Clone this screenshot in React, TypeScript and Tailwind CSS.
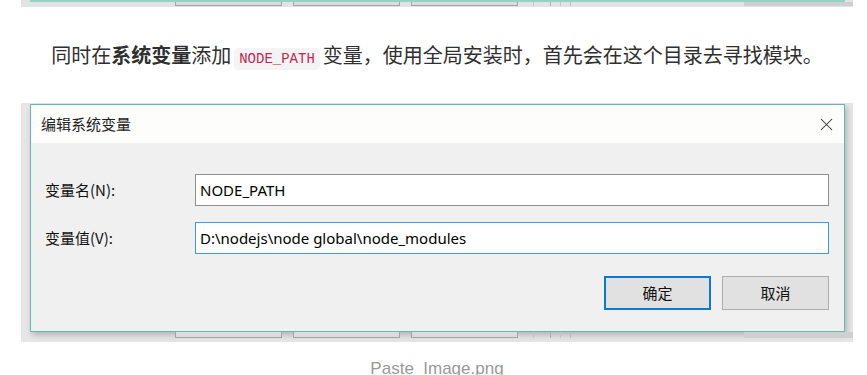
import { X } from "lucide-react";

// underlying window's button outlines peeking out under a dialog
const Outlines = ({ h }: { h: string }) => {
  return (
    <div className={`flex ${h}`}>
      <div className="ml-[154px] w-[107px] border-x border-b border-[#a3a3a3] bg-[#dcdcdc]" />
      <div className="ml-[11px] w-[107px] border-x border-b border-[#a3a3a3] bg-[#dcdcdc]" />
      <div className="ml-[11px] w-[107px] border-x border-b border-[#a3a3a3] bg-[#dcdcdc]" />
      <div className="ml-[15px] w-px bg-[#c4c4c4]" />
      <div className="ml-[16px] w-px bg-[#b0b0b0]" />
      <div className="ml-[9px] w-px bg-[#c4c4c4]" />
      <div className="ml-[9px] w-px bg-[#bdbdbd]" />
      <div className="ml-[173px] flex-1 bg-[#cfcfcf]" />
    </div>
  );
};

const Field = ({ label, value, active }: { label: string; value: string; active?: boolean }) => {
  return (
    <div className="flex items-center">
      <div className="w-[164px] pl-[14px] text-[15px] text-[#111]">{label}</div>
      <div
        className={`w-[634px] h-[32px] flex items-center px-[4px] bg-white border font-['Noto_Sans',sans-serif] text-[15px] text-black ${
          active ? "border-[#3d9be0]" : "border-[#8f8f8f]"
        }`}
      >
        {value}
      </div>
    </div>
  );
};

const EditDialog = () => {
  return (
    <div className="w-[815px] h-[228px] border border-[#5cbdae] bg-[#f0f0f0] flex flex-col shadow-[2px_3px_6px_rgba(0,0,0,0.22)]">
      <div className="h-[38px] bg-[#fdfdfc] flex items-center justify-between pl-[10px] pr-[7px]">
        <span className="text-[15px] text-[#222]">编辑系统变量</span>
        <X size={21} strokeWidth={1.2} className="text-[#333]" />
      </div>
      <div className="flex flex-col gap-[16px] pt-[31px]">
        <Field label="变量名(N):" value="NODE_PATH" />
        <Field label="变量值(V):" value="D:\nodejs\node global\node_modules" active />
      </div>
      <div className="flex justify-end gap-[11px] pr-[15px] mt-[22px]">
        <button className="w-[107px] h-[34px] bg-[#e1e1e1] border-2 border-[#0b78d4] text-[15px] text-[#111]">确定</button>
        <button className="w-[107px] h-[34px] bg-[#e1e1e1] border border-[#adadad] text-[15px] text-[#111]">取消</button>
      </div>
    </div>
  );
};

export default function App() {
  return (
    <div className="w-[867px] h-[375px] bg-white overflow-hidden font-['Noto_Sans_CJK_SC',sans-serif]">
      <div className="ml-[21px] w-[832px]">
        {/* bottom edge of the previous screenshot */}
        <div className="h-[7px] bg-[#e3e3e3] flex flex-col">
          <div className="ml-[9px] w-[815px] h-[2px] bg-[#8fd4c7]" />
          <Outlines h="h-[4px]" />
        </div>

        <p className="mt-[33px] h-[30px] leading-[30px] text-center text-[20px] text-[#2f2f2f]">
          同时在<b className="font-bold">系统变量</b>添加
          <code className="mx-[3px] px-[5px] py-[3px] rounded bg-[#f4f4f4] text-[#c7254e] font-['Liberation_Mono',monospace] text-[14px]">
            NODE_PATH
          </code>
          变量，使用全局安装时，首先会在这个目录去寻找模块。
        </p>

        <div className="mt-[33px] h-[239px] bg-[#e6e6e6] flex flex-col pt-[1px] pl-[9px]">
          <EditDialog />
          <div className="-ml-[9px] mt-0">
            <Outlines h="h-[6px]" />
          </div>
        </div>

        <div className="mt-[15px] leading-[24px] text-center font-['Liberation_Sans',sans-serif] text-[17px] text-[#999]">
          Paste_Image.png
        </div>
      </div>
    </div>
  );
}
